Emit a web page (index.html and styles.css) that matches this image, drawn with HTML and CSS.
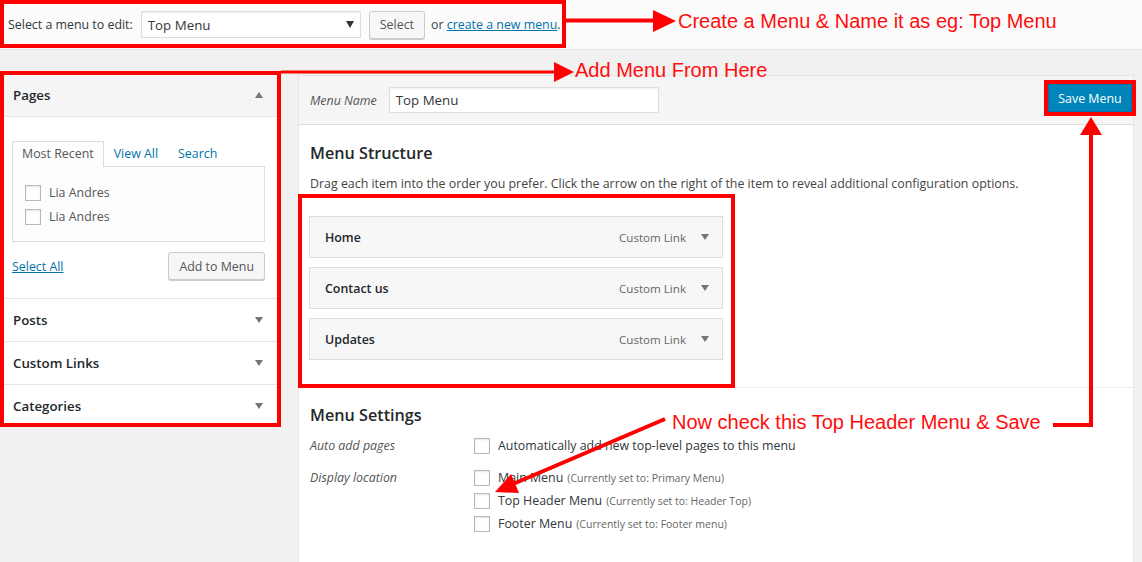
FILE: index.html
```html
<!DOCTYPE html>
<html>
<head>
<meta charset="utf-8">
<link rel="stylesheet" href="styles.css">
</head>
<body>
<div class="topbar">
  <div class="manage">
    <span class="lbl">Select a menu to edit:</span>
    <div class="select"><span>Top Menu</span><span class="caret"></span></div>
    <button class="btn">Select</button>
    <span class="or">or <a href="#">create a new menu</a>.</span>
  </div>
</div>
<div class="main">
  <div class="side">
    <div class="acc-h first">Pages <span class="tri up"></span></div>
    <div class="acc-c">
      <ul class="tabs">
        <li class="active">Most Recent</li>
        <li>View All</li>
        <li>Search</li>
      </ul>
      <div class="tabpanel">
        <label class="cb"><span class="box"></span>Lia Andres</label>
        <label class="cb"><span class="box"></span>Lia Andres</label>
      </div>
      <div class="actions">
        <a href="#">Select All</a>
        <button class="btn">Add to Menu</button>
      </div>
    </div>
    <div class="acc-h">Posts <span class="tri"></span></div>
    <div class="acc-h">Custom Links <span class="tri"></span></div>
    <div class="acc-h last">Categories <span class="tri"></span></div>
  </div>
  <div class="mgmt">
    <div class="mhead">
      <label class="mname">Menu Name</label>
      <div class="input">Top Menu</div>
      <button class="save">Save Menu</button>
    </div>
    <div class="mbody">
      <h3 class="h3">Menu Structure</h3>
      <p class="desc">Drag each item into the order you prefer. Click the arrow on the right of the item to reveal additional configuration options.</p>
      <div class="items">
        <div class="item"><span class="t">Home</span><span class="k">Custom Link</span><span class="tri"></span></div>
        <div class="item"><span class="t">Contact us</span><span class="k">Custom Link</span><span class="tri"></span></div>
        <div class="item"><span class="t">Updates</span><span class="k">Custom Link</span><span class="tri"></span></div>
      </div>
      <div class="settings">
        <h3 class="h3">Menu Settings</h3>
        <div class="row">
          <div class="row-l">Auto add pages</div>
          <div class="row-r">
            <label class="cb2"><span class="box"></span>Automatically add new top-level pages to this menu</label>
          </div>
        </div>
        <div class="row row2">
          <div class="row-l">Display location</div>
          <div class="row-r">
            <label class="cb2"><span class="box"></span>Main Menu <span class="cur">(Currently set to: Primary Menu)</span></label>
            <label class="cb2"><span class="box"></span>Top Header Menu <span class="cur">(Currently set to: Header Top)</span></label>
            <label class="cb2"><span class="box"></span>Footer Menu <span class="cur">(Currently set to: Footer menu)</span></label>
          </div>
        </div>
      </div>
    </div>
  </div>
</div>

<div class="annot">
  <svg class="arrows" width="1142" height="562" viewBox="0 0 1142 562">
    <g fill="#ff0000" stroke="none">
      <rect x="566" y="18.5" width="89" height="4"/>
      <polygon points="653,10 676,21 653,32"/>
      <rect x="281" y="70.5" width="275" height="3"/>
      <polygon points="554,62 574,72 554,82"/>
      <rect x="1089" y="133" width="4" height="294"/>
      <polygon points="1080,135 1091,117 1102,135"/>
      <rect x="1053" y="423" width="40" height="4"/>
      <polygon points="495,492 519,493 511,474"/>
    </g>
    <line x1="665" y1="419" x2="513" y2="484" stroke="#ff0000" stroke-width="4"/>
  </svg>
  <div class="note n1">Create a Menu &amp; Name it as eg: Top Menu</div>
  <div class="note n2">Add Menu From Here</div>
  <div class="note n3">Now check this Top Header Menu &amp; Save</div>
</div>
</body>
</html>
```

FILE: styles.css
```css
* { box-sizing: border-box; }

body {
  margin: 0;
  background: #f1f1f1;
  font-family: "Open Sans", "Noto Sans", sans-serif;
  font-size: 12.4px;
  color: #444;
  height: 562px;
  overflow: hidden;
  position: relative;
}

a { color: #0073aa; text-decoration: underline; }

/* top bar */
.topbar {
  height: 50px;
  background: #fbfbfb;
  border-bottom: 1px solid #e6e6e6;
}
.manage {
  width: 566px;
  height: 48px;
  outline: 4px solid #ff0000;
  outline-offset: -4px;
  display: flex;
  align-items: center;
  padding: 1px 0 0 8px;
}
.lbl { color: #32373c; margin-right: 8px; }
.select {
  width: 220px;
  height: 27px;
  border: 1px solid #ddd;
  background: #fff;
  display: flex;
  align-items: center;
  justify-content: space-between;
  padding: 0 6px 0 6px;
  font-size: 13.3px;
  color: #32373c;
  box-shadow: inset 0 1px 2px rgba(0,0,0,.07);
}
.caret {
  width: 0; height: 0;
  border-left: 4px solid transparent;
  border-right: 4px solid transparent;
  border-top: 7px solid #333;
}
.btn {
  height: 28px;
  padding: 0 10px;
  background: #f7f7f7;
  border: 1px solid #ccc;
  border-radius: 3px;
  box-shadow: 0 1px 0 #ccc;
  color: #555;
  font-family: inherit;
  font-size: 12.4px;
  margin-left: 8px;
}
.or { margin-left: 6px; color: #444; }

/* main */
.main {
  display: flex;
  padding-top: 21px;
}

/* left column */
.side {
  flex: none;
  width: 281px;
  height: 356px;
  background: #fff;
  outline: 4px solid #ff0000;
  outline-offset: -4px;
}
.acc-h {
  height: 43px;
  border-bottom: 1px solid #e5e5e5;
  display: flex;
  align-items: center;
  justify-content: space-between;
  padding: 0 18px 0 13px;
  font-size: 13.3px;
  font-weight: 600;
  color: #23282d;
}
.acc-h.first {
  height: 46px;
  padding-top: 2px;
  background: #f5f5f5;
}
.acc-h.last { height: 42px; border-bottom: none; }

.tri {
  width: 0; height: 0;
  border-left: 4px solid transparent;
  border-right: 4px solid transparent;
  border-top: 6px solid #72777c;
}
.tri.up {
  border-top: none;
  border-bottom: 6px solid #72777c;
}

.acc-c {
  height: 182px;
  padding: 24px 16px 0 12px;
  border-bottom: 1px solid #e5e5e5;
}
.tabs {
  display: flex;
  margin: 0;
  padding: 0;
  list-style: none;
  height: 25px;
}
.tabs li {
  height: 26px;
  padding: 0 9px;
  border: 1px solid transparent;
  border-bottom: none;
  line-height: 24px;
  color: #0073aa;
}
.tabs li.active {
  border-color: #ddd;
  background: #fdfdfd;
  color: #555;
  position: relative;
  z-index: 1;
}
.tabpanel {
  height: 76px;
  border: 1px solid #ddd;
  background: #fdfdfd;
  padding: 18px 12px 0;
}
.cb, .cb2 {
  display: flex;
  align-items: center;
  height: 16px;
  line-height: 16px;
  white-space: nowrap;
}
.cb { margin-bottom: 8px; color: #555; }
.box {
  flex: none;
  width: 16px;
  height: 16px;
  border: 1px solid #b4b9be;
  background: #fff;
  box-shadow: inset 0 1px 2px rgba(0,0,0,.1);
  margin-right: 8px;
}
.actions {
  display: flex;
  justify-content: space-between;
  align-items: center;
  margin-top: 10px;
  height: 28px;
}
.actions .btn { margin-left: 0; }

/* right column */
.mgmt {
  flex: none;
  margin-left: 17px;
  margin-top: 4px;
  width: 836px;
  height: 490px;
  background: #fff;
  border: 1px solid #e5e5e5;
  border-bottom: none;
}
.mhead {
  height: 49px;
  background: #f5f5f5;
  border-bottom: 1px solid #dfdfdf;
  display: flex;
  align-items: center;
  padding: 0 1px 0 11px;
}
.mname { font-style: italic; color: #555; margin-right: 12px; }
.input {
  width: 270px;
  height: 26px;
  border: 1px solid #ddd;
  background: #fff;
  padding-left: 6px;
  font-size: 13.3px;
  color: #32373c;
  display: flex;
  align-items: center;
  box-shadow: inset 0 1px 2px rgba(0,0,0,.07);
}
.save {
  margin-left: auto;
  margin-bottom: 4px;
  width: 84px;
  height: 28px;
  background: #0085ba;
  border: 1px solid #0073aa;
  border-radius: 0;
  color: #fff;
  font-family: inherit;
  font-size: 12.4px;
  outline: 4px solid #ff0000;
}

.mbody { padding: 0 12px 0 11px; }
.h3 {
  margin: 18px 0 0;
  font-size: 16.2px;
  font-weight: 600;
  line-height: 20px;
  color: #23282d;
}
.desc {
  margin: 12px 0 0;
  line-height: 18px;
  color: #444;
  white-space: nowrap;
}
.items {
  margin: 1px 0 0 -12px;
  width: 437px;
  padding: 22px 12px 28px 11px;
  outline: 4px solid #ff0000;
  outline-offset: -4px;
  position: relative;
  z-index: 1;
}
.item {
  height: 42px;
  border: 1px solid #dcdcdc;
  background: #f7f7f7;
  display: flex;
  align-items: center;
  padding: 0 13px 0 15px;
  margin-bottom: 9px;
}
.item:last-child { margin-bottom: 0; }
.item .t { flex: 1; font-weight: 600; color: #23282d; }
.item .k { color: #666; font-size: 11.6px; margin-right: 15px; }

.settings {
  margin: -1px -12px 0 -12px;
  padding: 17px 12px 0 12px;
  border-top: 1px solid #eee;
}
.settings .h3 { margin: 0; }
.row { display: flex; margin-top: 13px; }
.row2 { margin-top: 16px; }
.row-l {
  width: 164px;
  font-style: italic;
  color: #555;
  line-height: 16px;
}
.row-r { display: flex; flex-direction: column; gap: 7px; }
.cb2 { color: #32373c; }
.cur { color: #666; font-size: 10.5px; margin-left: 4px; }

/* annotations */
.annot {
  position: absolute;
  left: 0;
  top: 0;
  width: 1142px;
  height: 562px;
  pointer-events: none;
  z-index: 5;
}
.arrows { position: absolute; left: 0; top: 0; }
.note {
  position: absolute;
  font-family: "Liberation Sans", Arial, sans-serif;
  font-size: 20px;
  line-height: 24px;
  color: #ff0d0d;
  white-space: nowrap;
}
.n1 { left: 678px; top: 9px; }
.n2 { left: 575px; top: 58px; }
.n3 { left: 672px; top: 410px; }
```
